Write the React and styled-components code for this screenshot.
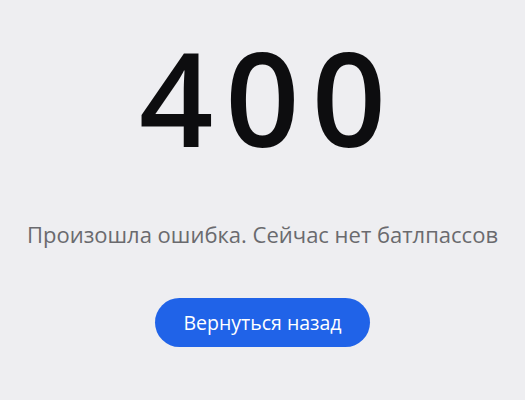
import React from "react";
import styled, { createGlobalStyle } from "styled-components";

const GlobalStyle = createGlobalStyle`
  html, body {
    margin: 0;
    padding: 0;
    background: #eeeef1;
    font-family: "Open Sans", "Noto Sans", sans-serif;
  }
`;

const Page = styled.main`
  width: 525px;
  height: 400px;
  display: flex;
  flex-direction: column;
  align-items: center;
  padding-top: 27px;
  box-sizing: border-box;
`;

// trailing letter-spacing is balanced by the left padding
const Code = styled.h1`
  margin: 0;
  padding-left: 12px;
  font-size: 130px;
  line-height: 140px;
  font-weight: 600;
  color: #0d0d0f;
  letter-spacing: 12px;
`;

const Message = styled.p`
  margin: 52px 0 0;
  font-size: 22px;
  line-height: 30px;
  color: #6a6a6e;
`;

const BackButton = styled.button`
  margin-top: 49px;
  width: 215px;
  height: 49px;
  border: none;
  border-radius: 25px;
  background: #2063e8;
  color: #fff;
  font-family: inherit;
  font-size: 19.5px;
  cursor: pointer;
`;

export default function App() {
  return (
    <>
      <GlobalStyle />
      <Page>
        <Code>400</Code>
        <Message>Произошла ошибка. Сейчас нет батлпассов</Message>
        <BackButton>Вернуться назад</BackButton>
      </Page>
    </>
  );
}
